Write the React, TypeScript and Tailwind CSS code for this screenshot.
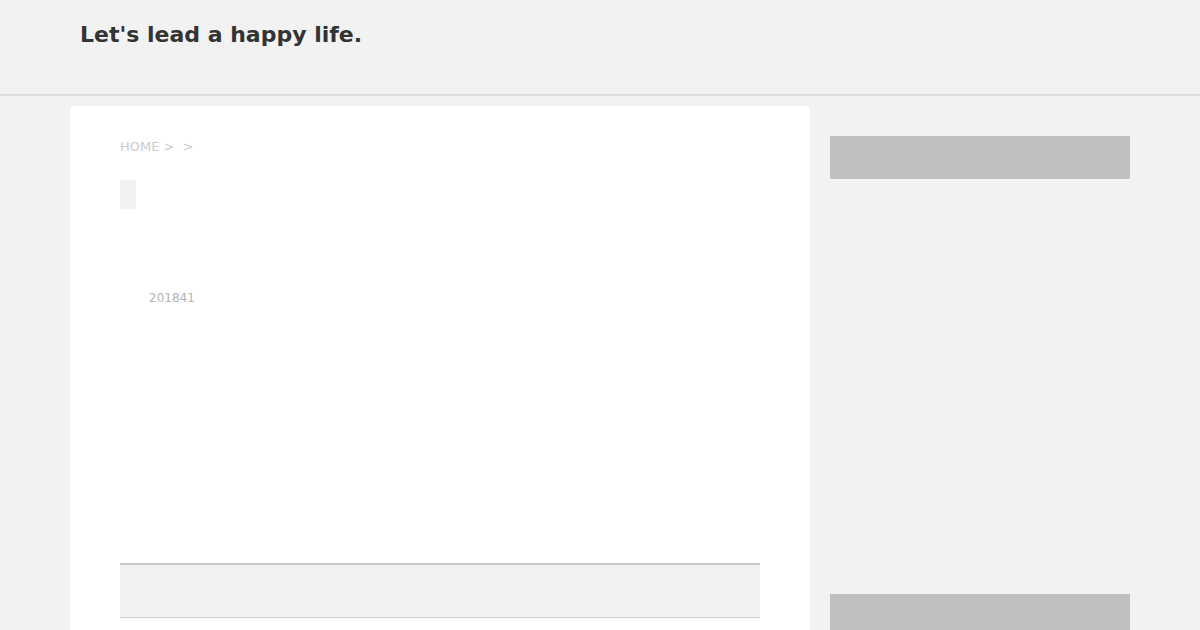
export default function App() {
  return (
    <div className="min-h-[630px] bg-[#f2f2f2] overflow-hidden" style={{ fontFamily: '"DejaVu Sans", sans-serif' }}>
      <header className="h-[96px] border-b-2 border-[#dddddd]">
        <div className="pl-[80px] pt-[21px]">
          <h1 className="text-[22px] font-bold text-[#333333] leading-[28px]">Let's lead a happy life.</h1>
        </div>
      </header>
      <div className="flex gap-[20px] pl-[70px] pt-[10px]">
        <main className="w-[740px] h-[600px] bg-white rounded-[4px] px-[50px] pt-[32px] flex flex-col">
          <div className="text-[13px] text-[#cccccc] leading-[18px]">HOME &gt;&nbsp;&nbsp;&gt;</div>
          <div className="mt-[24px] w-[16px] h-[29px] bg-[#f2f2f2]"></div>
          <div className="mt-[81px] pl-[29px] text-[12px] text-[#b4b4b4] leading-[16px]">201841</div>
          <div className="mt-[257px] h-[55px] bg-[#f2f2f2] border-t-2 border-[#c8c8c8] border-b border-b-[#cccccc]"></div>
        </main>
        <aside className="w-[300px] pt-[30px] flex flex-col">
          <div className="h-[43px] bg-[#c0c0c0]"></div>
          <div className="mt-[415px] h-[43px] bg-[#c0c0c0]"></div>
        </aside>
      </div>
    </div>
  );
}
